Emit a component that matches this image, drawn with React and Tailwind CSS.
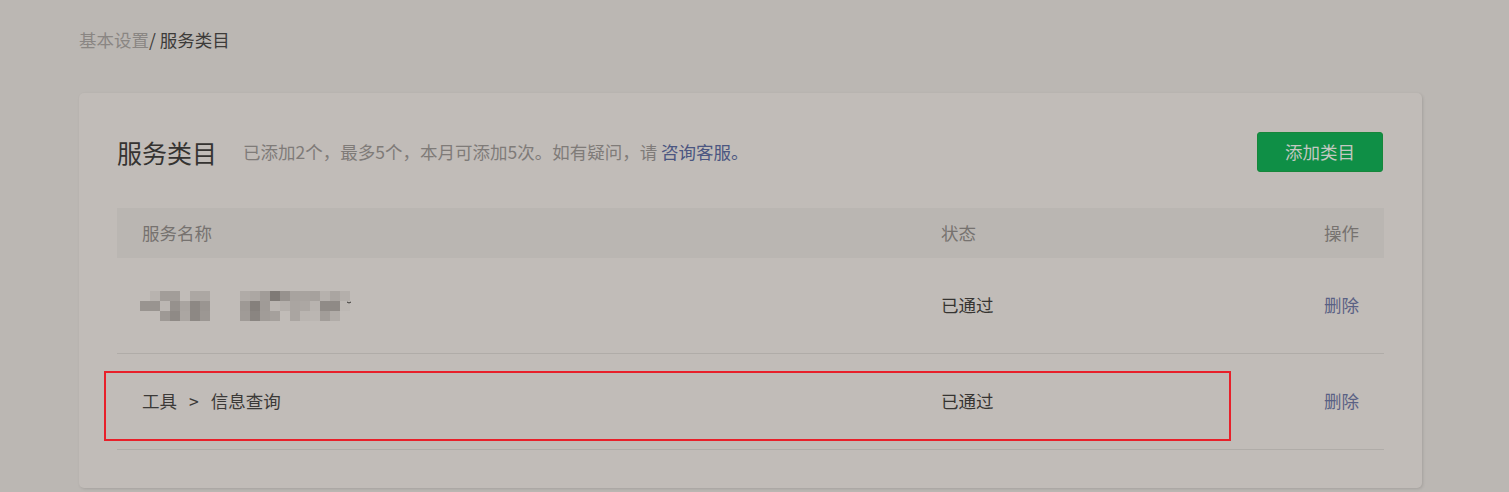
const mosaicCells = [
  // [x, y, color] in 10px cells, offsets relative to the blurred name
  [1, 0, "#b8b3af"], [2, 0, "#a29d99"], [3, 0, "#a29d99"], [5, 0, "#aca7a3"], [6, 0, "#aca7a3"],
  [0, 1, "#999490"], [1, 1, "#999490"], [2, 1, "#bcb7b3"], [3, 1, "#96918d"], [4, 1, "#a9a4a0"], [5, 1, "#8d8884"], [6, 1, "#9a9591"],
  [2, 2, "#9e9995"], [3, 2, "#8f8a86"], [4, 2, "#aba6a2"], [5, 2, "#8d8884"], [6, 2, "#9c9793"],
  [10, 0, "#b0aba7"], [11, 0, "#aca7a3"], [12, 0, "#a19c98"], [13, 0, "#7f7a76"], [14, 0, "#97928e"], [15, 0, "#a8a39f"], [16, 0, "#a8a39f"], [17, 0, "#a6a19d"], [18, 0, "#b6b1ad"], [19, 0, "#aaa5a1"], [20, 0, "#b4afab"],
  [10, 1, "#9e9995"], [11, 1, "#85807c"], [12, 1, "#a09b97"], [13, 1, "#bbb6b2"], [14, 1, "#b5b0ac"], [15, 1, "#aaa5a1"], [16, 1, "#aca7a3"], [17, 1, "#b8b3af"], [18, 1, "#908b87"], [19, 1, "#8f8a86"], [20, 1, "#bdb8b4"],
  [10, 2, "#a09b97"], [11, 2, "#8a8581"], [12, 2, "#a19c98"], [13, 2, "#a5a09c"], [15, 2, "#aaa5a1"], [16, 2, "#bab5b1"], [17, 2, "#bbb6b2"], [18, 2, "#a29d99"], [19, 2, "#b1aca8"],
];

const MosaicName = () => (
  <svg width="215" height="30" viewBox="0 0 215 30">
    {mosaicCells.map(([cx, cy, c], i) => (
      <rect key={i} x={cx * 10} y={cy * 10} width="10" height="10" fill={c} />
    ))}
    <path d="M207 11 l2 1 l2 -1" stroke="#3a3836" strokeWidth="1" fill="none" />
  </svg>
);

const App = () => {
  return (
    <div
      className="min-h-screen bg-[#bbb7b3] pl-[79px] pt-[28px] text-[17.5px]"
      style={{ fontFamily: '"Noto Sans CJK SC", "Noto Sans", sans-serif' }}
    >
      {/* Breadcrumb */}
      <div className="h-6 leading-6">
        <span className="text-[#8a8683]">基本设置</span>
        <span className="text-[#3d3b39]">/ 服务类目</span>
      </div>

      {/* Card */}
      <div className="mt-[41px] w-[1343px] rounded-[5px] bg-[#c1bcb8] px-[38px] pt-[39px] pb-[38px] shadow-[1px_1px_3px_rgba(0,0,0,0.12)]">
        {/* Title row */}
        <div className="flex h-10 items-center justify-between">
          <div className="flex items-center">
            <h2 className="text-[25px] leading-none text-[#353331]">服务类目</h2>
            <p className="ml-[26px] text-[#7f7b78]">
              已添加2个，最多5个，本月可添加5次。如有疑问，请 <span className="text-[#4b5681]">咨询客服。</span>
            </p>
          </div>
          <button className="mr-px h-10 w-[126px] rounded-[3px] border border-[#16873a] bg-[#0f8f46] text-[#c3c8c2]">
            添加类目
          </button>
        </div>

        {/* Table */}
        <div className="mt-9">
          <div className="flex h-[50px] items-center bg-[#bab6b2] pl-[25px] pr-[25px] text-[#76726f]">
            <div className="w-[799px]">服务名称</div>
            <div className="flex-1">状态</div>
            <div>操作</div>
          </div>

          <div className="flex h-[96px] items-center border-b border-[#b0aca8] pl-[23px] pr-[25px]">
            <div className="w-[801px]">
              <MosaicName />
            </div>
            <div className="flex-1 text-[#363432]">已通过</div>
            <div className="text-[#5a6184]">删除</div>
          </div>

          <div className="relative flex h-[96px] items-center border-b border-[#b0aca8] pl-[25px] pr-[25px]">
            <div className="w-[799px] text-[#3b3937]">
              工具<span className="mx-[12px]">&gt;</span>信息查询
            </div>
            <div className="flex-1 text-[#363432]">已通过</div>
            <div className="text-[#5a6184]">删除</div>
            {/* annotation box */}
            <div className="absolute left-[-13px] top-[17px] h-[70px] w-[1127px] border-2 border-[#e8202a]" />
          </div>
        </div>
      </div>
    </div>
  );
};

export default App;
